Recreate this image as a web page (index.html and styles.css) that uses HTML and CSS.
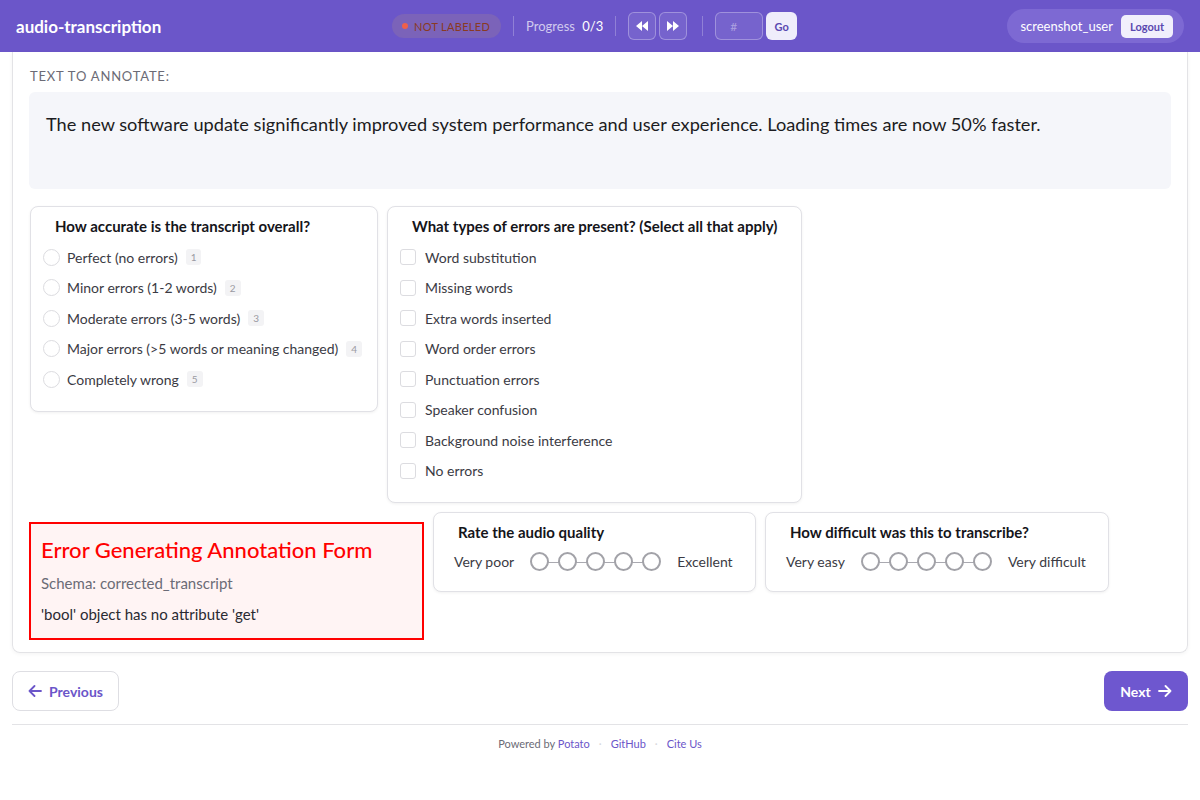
FILE: index.html
```html
<!DOCTYPE html>
<html lang="en">
  <head>
    <meta charset="UTF-8" />
    <meta name="viewport" content="width=device-width, initial-scale=1.0" />
    <title>audio-transcription</title>
    <link rel="stylesheet" href="styles.css">
  </head>
  <body>
    <div class="topbar">
      <div class="brand">audio-transcription</div>
      <div class="topbar-center">
        <span class="status-pill"><span class="dot"></span>NOT LABELED</span>
        <span class="sep"></span>
        <span class="progress">Progress <b>0/3</b></span>
        <span class="sep"></span>
        <button class="nav-icon" title="Previous">
          <svg width="12" height="10" viewBox="0 0 12 10"><path d="M6 0v10L0 5z M12 0v10L6 5z" fill="#fff"/></svg>
        </button>
        <button class="nav-icon" title="Next">
          <svg width="12" height="10" viewBox="0 0 12 10"><path d="M0 0v10l6-5z M6 0v10l6-5z" fill="#fff"/></svg>
        </button>
        <span class="sep"></span>
        <input class="jump-input" placeholder="#" />
        <button class="go-btn">Go</button>
      </div>
      <div class="user-box">
        <span class="username">screenshot_user</span>
        <button class="logout-btn">Logout</button>
      </div>
    </div>

    <div class="page">
      <div class="main-card">
        <div class="section-label">TEXT TO ANNOTATE:</div>
        <div class="text-box">
          The new software update significantly improved system performance and user experience. Loading times are now 50% faster.
        </div>

        <div class="forms">
          <div class="form-card w-accuracy">
            <div class="form-title">How accurate is the transcript overall?</div>
            <label class="option"><span class="radio"></span>Perfect (no errors)<span class="key">1</span></label>
            <label class="option"><span class="radio"></span>Minor errors (1-2 words)<span class="key">2</span></label>
            <label class="option"><span class="radio"></span>Moderate errors (3-5 words)<span class="key">3</span></label>
            <label class="option"><span class="radio"></span>Major errors (&gt;5 words or meaning changed)<span class="key">4</span></label>
            <label class="option"><span class="radio"></span>Completely wrong<span class="key">5</span></label>
          </div>

          <div class="form-card w-types">
            <div class="form-title">What types of errors are present? (Select all that apply)</div>
            <label class="option"><span class="check"></span>Word substitution</label>
            <label class="option"><span class="check"></span>Missing words</label>
            <label class="option"><span class="check"></span>Extra words inserted</label>
            <label class="option"><span class="check"></span>Word order errors</label>
            <label class="option"><span class="check"></span>Punctuation errors</label>
            <label class="option"><span class="check"></span>Speaker confusion</label>
            <label class="option"><span class="check"></span>Background noise interference</label>
            <label class="option"><span class="check"></span>No errors</label>
          </div>

          <div class="error-box">
            <div class="error-title">Error Generating Annotation Form</div>
            <div class="error-schema">Schema: corrected_transcript</div>
            <div class="error-msg">'bool' object has no attribute 'get'</div>
          </div>

          <div class="form-card w-quality">
            <div class="form-title">Rate the audio quality</div>
            <div class="scale">
              <span class="scale-label">Very poor</span>
              <div class="scale-dots">
                <span class="scale-dot"></span><span class="scale-dot"></span><span class="scale-dot"></span><span class="scale-dot"></span><span class="scale-dot"></span>
              </div>
              <span class="scale-label">Excellent</span>
            </div>
          </div>

          <div class="form-card w-difficulty">
            <div class="form-title">How difficult was this to transcribe?</div>
            <div class="scale">
              <span class="scale-label">Very easy</span>
              <div class="scale-dots">
                <span class="scale-dot"></span><span class="scale-dot"></span><span class="scale-dot"></span><span class="scale-dot"></span><span class="scale-dot"></span>
              </div>
              <span class="scale-label">Very difficult</span>
            </div>
          </div>
        </div>
      </div>

      <div class="pager">
        <button class="btn-prev">
          <svg width="14" height="12" viewBox="0 0 14 12"><path d="M13 6H1.5M6.5 1L1.5 6l5 5" fill="none" stroke="currentColor" stroke-width="1.8" stroke-linecap="round" stroke-linejoin="round"/></svg>
          Previous
        </button>
        <button class="btn-next">
          Next
          <svg width="14" height="12" viewBox="0 0 14 12"><path d="M1 6h11.5M7.5 1l5 5-5 5" fill="none" stroke="currentColor" stroke-width="1.8" stroke-linecap="round" stroke-linejoin="round"/></svg>
        </button>
      </div>

      <div class="footer">
        <span>Powered by <a href="#">Potato</a></span>
        <span class="fdot">·</span>
        <a href="#">GitHub</a>
        <span class="fdot">·</span>
        <a href="#">Cite Us</a>
      </div>
    </div>
  </body>
</html>
```

FILE: styles.css
```css
body {
  margin: 0;
  font-family: Lato, "Open Sans", sans-serif;
  color: #222;
  background: #fff;
}
button {
  font-family: inherit;
  cursor: pointer;
}

/* top bar */
.topbar {
  height: 52px;
  background: #6b56c9;
  display: flex;
  align-items: center;
  padding: 0 16px;
}
.brand {
  color: #fff;
  font-weight: 700;
  font-size: 17px;
  width: 376px;
}
.topbar-center {
  display: flex;
  align-items: center;
  flex: 1;
}
.status-pill {
  display: flex;
  align-items: center;
  gap: 6px;
  height: 24px;
  padding: 0 11px 0 10px;
  border-radius: 12px;
  background: #7b63b9;
  color: #8a3a22;
  font-size: 11px;
  letter-spacing: 0.3px;
}
.status-pill .dot {
  width: 6px;
  height: 6px;
  border-radius: 50%;
  background: #f0604a;
}
.sep {
  width: 1px;
  height: 20px;
  background: rgba(255, 255, 255, 0.25);
  margin: 0 12px;
}
.progress {
  color: rgba(255, 255, 255, 0.7);
  font-size: 13px;
}
.progress b {
  color: #fff;
  font-weight: 400;
  margin-left: 4px;
}
.nav-icon {
  width: 28px;
  height: 28px;
  border-radius: 6px;
  border: 1px solid rgba(255, 255, 255, 0.3);
  background: rgba(255, 255, 255, 0.08);
  display: flex;
  align-items: center;
  justify-content: center;
  margin-right: 3px;
  padding: 0;
}
.jump-input {
  width: 48px;
  height: 28px;
  box-sizing: border-box;
  border-radius: 6px;
  border: 1px solid rgba(255, 255, 255, 0.3);
  background: rgba(255, 255, 255, 0.08);
  color: #fff;
  padding: 0 14px;
  font-size: 12px;
  font-family: inherit;
}
.jump-input::placeholder {
  color: rgba(255, 255, 255, 0.4);
}
.go-btn {
  margin-left: 3px;
  height: 28px;
  width: 31px;
  border: none;
  border-radius: 6px;
  background: #efedfb;
  color: #5a48b0;
  font-size: 11px;
  font-weight: 700;
  padding: 0;
}
.user-box {
  display: flex;
  align-items: center;
  gap: 8px;
  height: 34px;
  padding: 0 11px 0 13px;
  border-radius: 17px;
  background: #7d69d3;
}
.username {
  color: #fff;
  font-size: 13px;
}
.logout-btn {
  height: 23px;
  padding: 0 9px;
  border: none;
  border-radius: 5px;
  background: #f1effc;
  color: #5a48b0;
  font-size: 11px;
  font-weight: 700;
}

/* page */
.page {
  padding: 0 12px;
}
.main-card {
  border: 1px solid #e3e3e6;
  border-top: none;
  border-radius: 0 0 8px 8px;
  box-shadow: 0 1px 4px rgba(0, 0, 0, 0.05);
  padding: 16px 16px 12px 16px;
}
.section-label {
  font-size: 13px;
  letter-spacing: 0.8px;
  color: #6b6b76;
  margin: 0 0 8px 1px;
}
.text-box {
  background: #f5f6fa;
  border-radius: 6px;
  height: 97px;
  box-sizing: border-box;
  padding: 21px 17px;
  font-size: 18.2px;
  color: #1c1c22;
}

.forms {
  display: flex;
  flex-wrap: wrap;
  align-items: flex-start;
  gap: 9px;
  margin-top: 17px;
}
.form-card {
  border: 1px solid #e1e1e6;
  border-radius: 8px;
  box-shadow: 0 1px 3px rgba(0, 0, 0, 0.06);
  padding: 10px 12px 16px 12px;
  box-sizing: border-box;
  background: #fff;
}
.w-accuracy { width: 348px; margin-left: 1px; }
.w-types { width: 415px; }
.w-quality { width: 323px; padding-bottom: 20px; }
.w-difficulty { width: 344px; padding-bottom: 20px; }
.form-title {
  font-size: 15px;
  font-weight: 700;
  color: #15151a;
  padding-left: 12px;
  margin-bottom: 7px;
}
.option {
  display: flex;
  align-items: center;
  height: 30.5px;
  font-size: 14px;
  color: #3b3b44;
  white-space: nowrap;
}
.radio {
  width: 15px;
  height: 15px;
  border-radius: 50%;
  border: 1px solid #dcdce0;
  margin-right: 7px;
}
.check {
  width: 14px;
  height: 14px;
  border-radius: 3px;
  border: 1px solid #dcdce0;
  margin-right: 9px;
}
.key {
  font-size: 10px;
  color: #9a9aa2;
  background: #f3f3f5;
  border-radius: 3px;
  padding: 2px 5px;
  margin-left: 8px;
}

.error-box {
  width: 395px;
  box-sizing: border-box;
  border: 2px solid #ff0000;
  background: #fff4f4;
  padding: 12px 10px 15px 10px;
  margin-top: 10px;
}
.error-title {
  color: #ff0000;
  font-size: 22px;
  font-weight: 500;
  margin-bottom: 11px;
}
.error-schema {
  color: #6b6b76;
  font-size: 15px;
  margin-bottom: 13px;
}
.error-msg {
  color: #2a2a32;
  font-size: 15px;
}

.scale {
  display: flex;
  align-items: center;
  gap: 16px;
  font-size: 14px;
  color: #3b3b44;
  padding: 4px 0 0 8px;
}
.scale-dots {
  display: flex;
  gap: 9px;
  position: relative;
}
.scale-dots::before {
  content: "";
  position: absolute;
  left: 10px;
  right: 10px;
  top: 50%;
  height: 1px;
  background: #a9a9b0;
}
.scale-dot {
  width: 19px;
  height: 19px;
  box-sizing: border-box;
  border-radius: 50%;
  border: 2px solid #a2a2a8;
  background: #fff;
  position: relative;
}

/* pager */
.pager {
  display: flex;
  justify-content: space-between;
  margin-top: 18px;
  padding-bottom: 13px;
  border-bottom: 1px solid #e3e3e6;
}
.btn-prev,
.btn-next {
  height: 40px;
  border-radius: 8px;
  display: flex;
  align-items: center;
  gap: 7px;
  font-size: 14px;
  font-weight: 700;
}
.btn-prev {
  width: 107px;
  justify-content: center;
  background: #fff;
  border: 1px solid #dedee3;
  color: #6b56c9;
}
.btn-next {
  width: 84px;
  justify-content: center;
  background: #6e57cf;
  border: none;
  color: #fff;
}

.footer {
  font-size: 11px;
  color: #6b6b76;
  margin-top: 12px;
  display: flex;
  justify-content: center;
  gap: 9px;
}
.footer a {
  color: #6b56c9;
  text-decoration: none;
}
.fdot {
  color: #d8d8dc;
}
```
